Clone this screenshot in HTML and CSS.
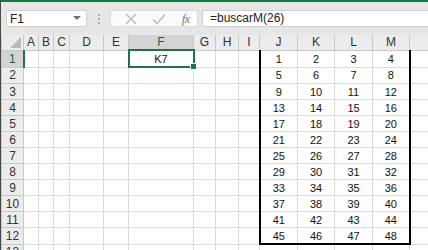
FILE: index.html
```html
<!DOCTYPE html>
<html lang="es">
<head>
    <meta charset="UTF-8">
    <meta name="viewport" content="width=device-width, initial-scale=1.0">
    <title>Hoja1</title>
    <link rel="stylesheet" href="styles.css">
</head>
<body>
    <div class="app">
        <div class="formula-bar">
            <div class="name-box">
                <span>F1</span>
                <svg class="caret" width="8" height="5" viewBox="0 0 8 5"><path d="M0 0h8L4 4z" fill="#707070"/></svg>
            </div>
            <div class="grip"><i></i><i></i><i></i></div>
            <div class="fx-box">
                <svg width="12" height="12" viewBox="0 0 12 12"><path d="M1 1l10 10M11 1L1 11" stroke="#b8b8b8" stroke-width="1.2" fill="none"/></svg>
                <svg width="14" height="12" viewBox="0 0 14 12"><path d="M1 6.5l4 4L13 1.5" stroke="#b8b8b8" stroke-width="1.4" fill="none"/></svg>
                <span class="fx">fx</span>
            </div>
            <div class="formula-input">=buscarM(26)</div>
        </div>

        <table class="sheet">
            <colgroup>
                <col style="width:22px"><col style="width:15px"><col style="width:15px"><col style="width:16px">
                <col style="width:34px"><col style="width:25px"><col style="width:65px"><col style="width:22px">
                <col style="width:23px"><col style="width:21px"><col style="width:38px"><col style="width:37px">
                <col style="width:38px"><col style="width:37px"><col style="width:40px">
            </colgroup>
            <thead>
                <tr>
                    <th class="corner"><span class="tri"></span></th>
                    <th>A</th><th>B</th><th>C</th><th>D</th><th>E</th>
                    <th class="sel-col">F</th>
                    <th>G</th><th>H</th><th>I</th><th>J</th><th>K</th><th>L</th><th>M</th><th></th>
                </tr>
            </thead>
            <tbody id="rows"></tbody>
        </table>
    </div>

    <script>
        const tbody = document.getElementById("rows");
        for (let r = 1; r <= 13; r++) {
            const tr = document.createElement("tr");
            let html = `<th class="${r === 1 ? 'sel-row' : ''}">${r}</th>`;
            for (let c = 0; c < 14; c++) {
                let cls = [];
                let text = "";
                if (r === 1 && c === 5) {
                    cls.push("active");
                    text = "K7<span class=\"handle\"></span>";
                }
                if (r <= 12 && c >= 9 && c <= 12) {
                    text = (r - 1) * 4 + (c - 8);
                    if (c === 9) cls.push("box-l");
                    if (c === 12) cls.push("box-r");
                    if (r === 12) cls.push("box-b");
                }
                html += `<td class="${cls.join(' ')}">${text}</td>`;
            }
            tr.innerHTML = html;
            tbody.appendChild(tr);
        }
    </script>
</body>
</html>
```

FILE: styles.css
```css
body {
    margin: 0;
    padding: 0;
    overflow: hidden;
    font-family: "Liberation Sans", Arial, sans-serif;
    background-color: #fff;
}
.app {
    border-left: 1px solid #4a4a4a;
    height: 250px;
    overflow: hidden;
}
.formula-bar {
    display: flex;
    align-items: flex-start;
    border-top: 2px solid #217346;
    background-color: #e6e6e6;
    box-sizing: border-box;
    height: 35px;
    padding-top: 8px;
}
.name-box {
    display: flex;
    align-items: center;
    justify-content: space-between;
    width: 81px;
    height: 17px;
    margin-left: 5px;
    padding: 0 5px 0 3px;
    box-sizing: border-box;
    background-color: #fff;
    border: 1px solid #d0d0d0;
    font-size: 12px;
    color: #222;
}
.grip {
    display: flex;
    flex-direction: column;
    justify-content: center;
    gap: 2px;
    width: 2px;
    height: 17px;
    margin-left: 11px;
}
.grip i {
    display: block;
    width: 2px;
    height: 2px;
    background-color: #b0b0b0;
}
.fx-box {
    display: flex;
    align-items: center;
    justify-content: space-around;
    width: 88px;
    height: 17px;
    margin-left: 10px;
    padding-left: 6px;
    box-sizing: border-box;
    background-color: #fbfbfb;
    border: 1px solid #dcdcdc;
}
.fx {
    font-family: "Liberation Serif", "Times New Roman", serif;
    font-style: italic;
    font-size: 13px;
    color: #7a7a7a;
    letter-spacing: -1px;
}
.formula-input {
    flex-grow: 1;
    height: 17px;
    margin-left: 4px;
    padding-left: 7px;
    box-sizing: border-box;
    background-color: #fff;
    border: 1px solid #d0d0d0;
    border-right: none;
    font-size: 12px;
    line-height: 15px;
    color: #222;
}
.sheet {
    table-layout: fixed;
    border-collapse: collapse;
    width: 428px;
    font-size: 11px;
}
.sheet th,
.sheet td {
    height: 15px;
    padding: 0;
    border: 1px solid #dadada;
    text-align: center;
    white-space: nowrap;
    overflow: hidden;
    line-height: 14px;
}
.sheet thead th {
    height: 14px;
    line-height: 13px;
    background-color: #ececec;
    border-color: #c8c8c8;
    border-top: none;
    font-weight: normal;
    color: #333;
    font-size: 12px;
}
.sheet tbody th {
    background-color: #ececec;
    border-color: #c8c8c8;
    font-weight: normal;
    color: #333;
    font-size: 12px;
}
.sheet td {
    color: #111;
}
.sheet thead th.sel-col {
    background-color: #d4d4d4;
    border-bottom: 2px solid #217346;
    color: #1e5e3a;
}
.sheet tbody th.sel-row {
    background-color: #d4d4d4;
    border-right: 2px solid #217346;
    color: #1e5e3a;
}
.corner {
    position: relative;
}
.tri {
    position: absolute;
    right: 2px;
    bottom: 2px;
    width: 0;
    height: 0;
    border-left: 11px solid transparent;
    border-bottom: 11px solid #b8b8b8;
}
.sheet td.active {
    position: relative;
    overflow: visible;
    border: 2px solid #217346;
}
.handle {
    position: absolute;
    right: -4px;
    bottom: -4px;
    width: 5px;
    height: 5px;
    background-color: #217346;
    border: 1px solid #fff;
}
.sheet td.box-l {
    border-left: 2px solid #000;
}
.sheet td.box-r {
    border-right: 2px solid #000;
}
.sheet td.box-b {
    border-bottom: 2px solid #000;
}
```
